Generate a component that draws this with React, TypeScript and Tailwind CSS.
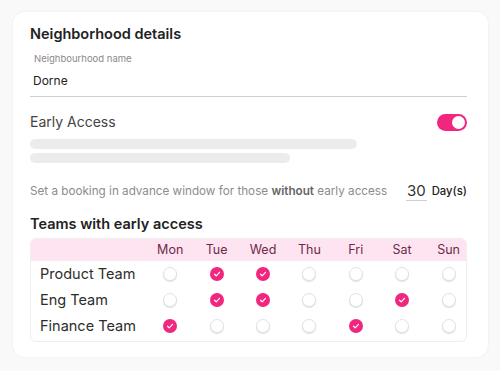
const days = ["Mon", "Tue", "Wed", "Thu", "Fri", "Sat", "Sun"];

const teams: { name: string; checked: boolean[] }[] = [
  { name: "Product Team", checked: [false, true, true, false, false, false, false] },
  { name: "Eng Team", checked: [false, true, true, false, false, true, false] },
  { name: "Finance Team", checked: [true, false, false, false, true, false, false] },
];

const Check = ({ on }: { on: boolean }) =>
  on ? (
    <span className="flex h-[14px] w-[14px] items-center justify-center rounded-full bg-[#f0267f]">
      <svg width="8" height="8" viewBox="0 0 8 8" fill="none">
        <path d="M1.5 4.2 3.2 5.8 6.5 2.3" stroke="white" strokeWidth="1.2" strokeLinecap="round" strokeLinejoin="round" />
      </svg>
    </span>
  ) : (
    <span className="block h-[14px] w-[14px] rounded-full border border-[#e2e2e2] bg-white shadow-[0_1px_1px_rgba(0,0,0,0.12)]" />
  );

export default function App() {
  return (
    <div className="h-[371px] w-[500px] bg-[#f9f9f9] pl-[13px] pt-[12px] font-['Inter',sans-serif]">
      <div className="h-[345px] w-[475px] rounded-[12px] bg-white px-[17px] pt-[13px] shadow-[0_0_3px_rgba(0,0,0,0.06)]">
        <h2 className="text-[14.5px] font-semibold leading-[18px] text-[#222]">Neighborhood details</h2>

        <div className="mt-[10px] w-[437px] border-b border-[#cfcfcf] pb-[8px]">
          <div className="pl-[4px] text-[9.5px] leading-[12px] text-[#8a8a8a]">Neighbourhood name</div>
          <div className="mt-[8px] pl-[3px] text-[12px] leading-[15px] text-[#222]">Dorne</div>
        </div>

        <div className="mt-[16px] flex w-[437px] items-center justify-between">
          <span className="text-[14px] leading-[18px] text-[#444]">Early Access</span>
          <span className="flex h-[17px] w-[30px] items-center justify-end rounded-full bg-[#f0267f] pr-[2px]">
            <span className="h-[13px] w-[13px] rounded-full bg-white" />
          </span>
        </div>

        <div className="mt-[8px] h-[10px] w-[327px] rounded-full bg-[#ececec]" />
        <div className="mt-[4px] h-[10px] w-[260px] rounded-full bg-[#ececec]" />

        <div className="mt-[19px] flex w-[437px] items-center">
          <span className="text-[11.7px] leading-[15px] text-[#8c8c8c]">
            Set a booking in advance window for those <b className="font-semibold text-[#666]">without</b> early access
          </span>
          <span className="ml-auto mr-[5px] border-b border-[#cfcfcf] px-[1px] text-[15px] leading-[18px] text-[#333]">30</span>
          <span className="text-[11.3px] font-medium leading-[15px] text-[#222]">Day(s)</span>
        </div>

        <h3 className="mt-[14px] text-[14.5px] font-semibold leading-[18px] text-[#222]">Teams with early access</h3>

        <div className="mt-[5px] w-[437px] overflow-hidden rounded-[6px] border border-[#efefef]">
          <div className="grid h-[22px] grid-cols-[116px_repeat(7,46.4px)] items-center bg-[#fde4f0] text-[12.5px] text-[#6e2a4a]">
            <span />
            {days.map((d) => (
              <span key={d} className="text-center">{d}</span>
            ))}
          </div>
          <div className="pb-[2px]">
            {teams.map((t) => (
              <div key={t.name} className="grid h-[26px] grid-cols-[116px_repeat(7,46.4px)] items-center">
                <span className="pl-[9px] text-[14.5px] text-[#2d2d2d]">{t.name}</span>
                {t.checked.map((c, i) => (
                  <span key={i} className="flex justify-center">
                    <Check on={c} />
                  </span>
                ))}
              </div>
            ))}
          </div>
        </div>
      </div>
    </div>
  );
}
